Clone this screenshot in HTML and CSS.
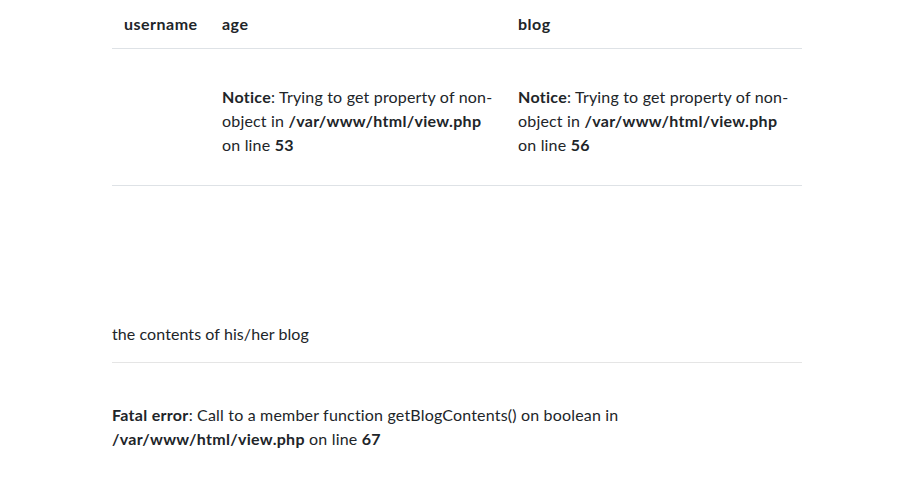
FILE: index.html
```html
<!DOCTYPE html>
<html>
<head>
<meta charset="utf-8">
<link rel="stylesheet" href="styles.css">
</head>
<body>
<div class="container">
  <table class="table">
    <thead>
      <tr>
        <th class="col-user">username</th>
        <th>age</th>
        <th>blog</th>
      </tr>
    </thead>
    <tbody>
      <tr>
        <td></td>
        <td><br>
<b>Notice</b>:  Trying to get property of non-object in <b>/var/www/html/view.php</b> on line <b>53</b><br></td>
        <td><br>
<b>Notice</b>:  Trying to get property of non-object in <b>/var/www/html/view.php</b> on line <b>56</b><br></td>
      </tr>
    </tbody>
  </table>
  <div class="spacer"></div>
  <p class="contents">the contents of his/her blog</p>
  <hr class="divider">
  <div class="error"><br>
<b>Fatal error</b>:  Call to a member function getBlogContents() on boolean in <b>/var/www/html/view.php</b> on line <b>67</b><br></div>
</div>
</body>
</html>
```
FILE: styles.css
```css
html, body {
  margin: 0;
  padding: 0;
  background: #fff;
}
body {
  font-family: "Lato", "Open Sans", sans-serif;
  font-size: 16px;
  line-height: 24px;
  letter-spacing: 0.18px;
  color: #212529;
}
.container {
  width: 690px;
  margin: 0 auto;
}
.table {
  width: 100%;
  border-collapse: collapse;
  margin-bottom: 16px;
}
.table th {
  text-align: left;
  font-weight: 700;
  letter-spacing: 0.5px;
  padding: 12px;
  border-bottom: 1px solid #dee2e6;
  vertical-align: bottom;
}
.table td {
  padding: 12px 12px 28px;
  vertical-align: top;
  border-bottom: 1px solid #dee2e6;
}
.table th.col-user {
  width: 74px;
}
.spacer {
  height: 120px;
}
.contents {
  margin: 0 0 16px;
  letter-spacing: 0.08px;
}
.divider {
  margin: 16px 0;
  border: 0;
  border-top: 1px solid rgba(0,0,0,0.1);
}
.error b, .table b {
  font-weight: 700;
  letter-spacing: 0.3px;
}
```
